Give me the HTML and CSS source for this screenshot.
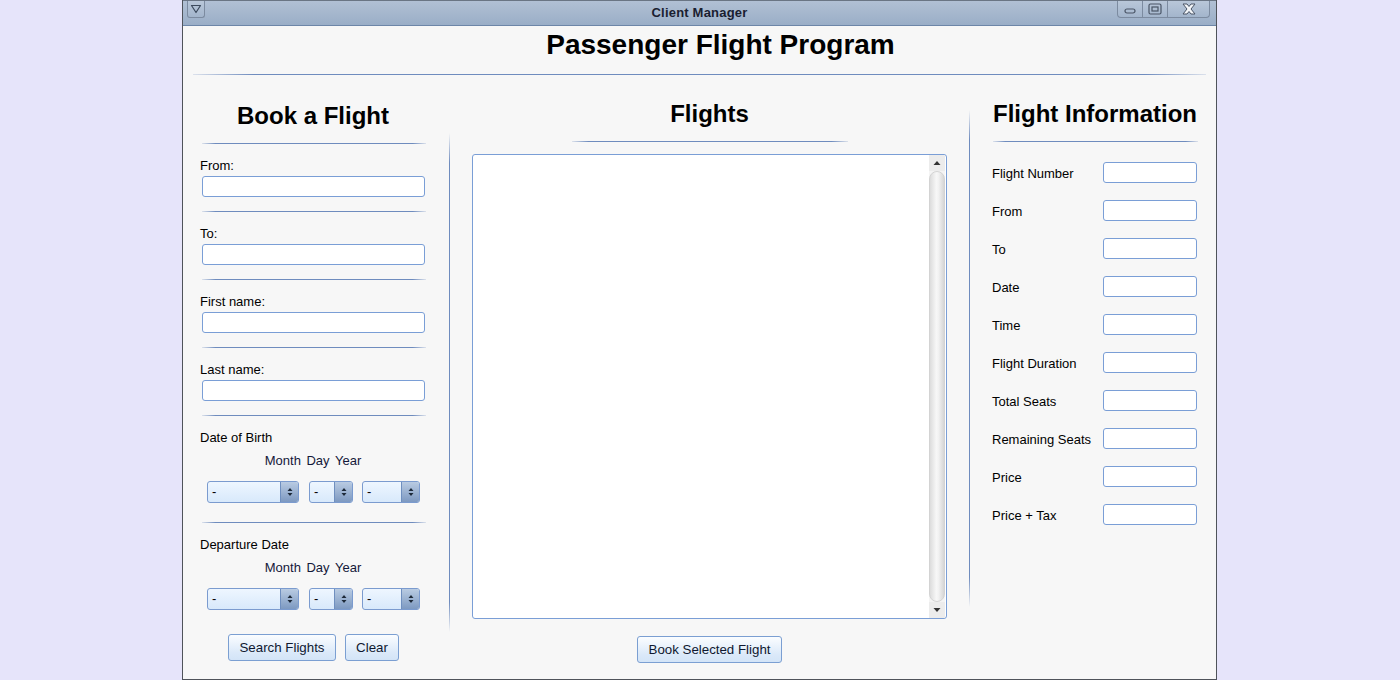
FILE: index.html
```html
<!DOCTYPE html>
<html>
<head>
<meta charset="utf-8">
<link rel="stylesheet" href="styles.css">
</head>
<body>
<div class="window">
  <div class="titlebar">
    <div class="sysbtn">
      <svg width="12" height="10" viewBox="0 0 12 10"><path d="M1.5 1.5 L10.5 1.5 L6 8.5 Z" fill="none" stroke="#3d4b5e" stroke-width="1.2" stroke-linejoin="round"/></svg>
    </div>
    <div class="wintitle">Client Manager</div>
    <div class="winbtns">
      <div class="wb wb-min"><svg width="12" height="6" viewBox="0 0 12 6"><rect x="1" y="1" width="10" height="4" rx="2" fill="none" stroke="#4a5566" stroke-width="1.2"/></svg></div>
      <div class="wb wb-max"><svg width="14" height="12" viewBox="0 0 14 12"><rect x="1" y="1" width="12" height="10" rx="1.5" fill="none" stroke="#4a5566" stroke-width="1.2"/><rect x="4" y="4" width="6" height="4" fill="none" stroke="#4a5566" stroke-width="1.2"/></svg></div>
      <div class="wb wb-close"><svg width="14" height="12" viewBox="0 0 14 12"><path d="M1 1 L5 1 L7 3.5 L9 1 L13 1 L9 6 L13 11 L9 11 L7 8.5 L5 11 L1 11 L5 6 Z" fill="#f4f6f9" stroke="#4a5566" stroke-width="1" stroke-linejoin="round"/></svg></div>
    </div>
  </div>
  <div class="content">
    <div class="header">
      <h1 class="apptitle">Passenger Flight Program</h1>
      <div class="sep hsep-main"></div>
    </div>
    <div class="main">
      <div class="col-left">
        <h2 class="coltitle">Book a Flight</h2>
        <div class="sep lsep"></div>
        <div class="lbl">From:</div>
        <div class="field"></div>
        <div class="sep lsep"></div>
        <div class="lbl">To:</div>
        <div class="field"></div>
        <div class="sep lsep"></div>
        <div class="lbl">First name:</div>
        <div class="field"></div>
        <div class="sep lsep"></div>
        <div class="lbl">Last name:</div>
        <div class="field"></div>
        <div class="sep lsep"></div>
        <div class="lbl">Date of Birth</div>
        <div class="mdy">Month Day Year</div>
        <div class="combos">
          <div class="combo c-month"><span class="cval">-</span><span class="carrow"><svg width="6" height="10" viewBox="0 0 6 10"><path d="M0.5 4 L3 1 L5.5 4 Z M0.5 6 L3 9 L5.5 6 Z" fill="#1e2a3a"/></svg></span></div>
          <div class="combo c-day"><span class="cval">-</span><span class="carrow"><svg width="6" height="10" viewBox="0 0 6 10"><path d="M0.5 4 L3 1 L5.5 4 Z M0.5 6 L3 9 L5.5 6 Z" fill="#1e2a3a"/></svg></span></div>
          <div class="combo c-year"><span class="cval">-</span><span class="carrow"><svg width="6" height="10" viewBox="0 0 6 10"><path d="M0.5 4 L3 1 L5.5 4 Z M0.5 6 L3 9 L5.5 6 Z" fill="#1e2a3a"/></svg></span></div>
        </div>
        <div class="sep lsep sep-after-combo"></div>
        <div class="lbl">Departure Date</div>
        <div class="mdy">Month Day Year</div>
        <div class="combos">
          <div class="combo c-month"><span class="cval">-</span><span class="carrow"><svg width="6" height="10" viewBox="0 0 6 10"><path d="M0.5 4 L3 1 L5.5 4 Z M0.5 6 L3 9 L5.5 6 Z" fill="#1e2a3a"/></svg></span></div>
          <div class="combo c-day"><span class="cval">-</span><span class="carrow"><svg width="6" height="10" viewBox="0 0 6 10"><path d="M0.5 4 L3 1 L5.5 4 Z M0.5 6 L3 9 L5.5 6 Z" fill="#1e2a3a"/></svg></span></div>
          <div class="combo c-year"><span class="cval">-</span><span class="carrow"><svg width="6" height="10" viewBox="0 0 6 10"><path d="M0.5 4 L3 1 L5.5 4 Z M0.5 6 L3 9 L5.5 6 Z" fill="#1e2a3a"/></svg></span></div>
        </div>
        <div class="btnrow">
          <button class="btn btn-search">Search Flights</button>
          <button class="btn btn-clear">Clear</button>
        </div>
      </div>
      <div class="vsep vsep-left"></div>
      <div class="col-center">
        <h2 class="coltitle">Flights</h2>
        <div class="sep csep"></div>
        <div class="listbox">
          <div class="listarea"></div>
          <div class="scrollbar">
            <div class="sb-arrow"><svg width="8" height="6" viewBox="0 0 8 6"><path d="M0.5 5 L4 1 L7.5 5 Z" fill="#333"/></svg></div>
            <div class="sb-track"></div>
            <div class="sb-arrow"><svg width="8" height="6" viewBox="0 0 8 6"><path d="M0.5 1 L4 5 L7.5 1 Z" fill="#333"/></svg></div>
          </div>
        </div>
        <button class="btn btn-book">Book Selected Flight</button>
      </div>
      <div class="vsep vsep-right"></div>
      <div class="col-right">
        <h2 class="coltitle rtitle">Flight Information</h2>
        <div class="sep rsep"></div>
        <div class="info">
          <div class="irow"><span class="ilbl">Flight Number</span><div class="ifield"></div></div>
          <div class="irow"><span class="ilbl">From</span><div class="ifield"></div></div>
          <div class="irow"><span class="ilbl">To</span><div class="ifield"></div></div>
          <div class="irow"><span class="ilbl">Date</span><div class="ifield"></div></div>
          <div class="irow"><span class="ilbl">Time</span><div class="ifield"></div></div>
          <div class="irow"><span class="ilbl">Flight Duration</span><div class="ifield"></div></div>
          <div class="irow"><span class="ilbl">Total Seats</span><div class="ifield"></div></div>
          <div class="irow"><span class="ilbl">Remaining Seats</span><div class="ifield"></div></div>
          <div class="irow"><span class="ilbl">Price</span><div class="ifield"></div></div>
          <div class="irow"><span class="ilbl">Price + Tax</span><div class="ifield"></div></div>
        </div>
      </div>
    </div>
  </div>
</div>
</body>
</html>
```

FILE: styles.css
```css
* { box-sizing: border-box; }
html, body { margin: 0; padding: 0; }
body {
  background: #e6e4fa;
  font-family: "Liberation Sans", Arial, sans-serif;
  color: #000;
  width: 1400px;
  height: 680px;
  overflow: hidden;
}
.window {
  width: 1035px;
  height: 680px;
  margin-left: 182px;
  border-left: 1px solid #4f535a;
  border-right: 1px solid #4f535a;
  border-bottom: 1px solid #4f535a;
  background: #f7f7f7;
  display: flex;
  flex-direction: column;
}
.titlebar {
  height: 26px;
  flex: none;
  position: relative;
  background: linear-gradient(#b1c0d4, #9aaec7);
  border-top: 1px solid #6a7584;
  border-bottom: 1px solid #6d86a8;
  display: flex;
  align-items: flex-start;
}
.sysbtn {
  width: 18px;
  height: 17px;
  margin-left: 4px;
  border: 1px solid #7c8ba0;
  border-top: none;
  border-radius: 0 0 3px 3px;
  background: linear-gradient(#b9c7d9, #a3b5cc);
  display: flex;
  align-items: center;
  justify-content: center;
}
.wintitle {
  position: absolute;
  left: 0;
  right: 0;
  top: 4px;
  text-align: center;
  font-size: 13px;
  letter-spacing: 0.2px;
  font-weight: bold;
  color: #1a2030;
  pointer-events: none;
}
.winbtns {
  margin-left: auto;
  margin-right: 6px;
  height: 17px;
  display: flex;
  border: 1px solid #7c8ba0;
  border-top: none;
  border-radius: 0 0 4px 4px;
  background: linear-gradient(#b9c7d9, #a3b5cc);
}
.wb {
  height: 100%;
  display: flex;
  align-items: center;
  justify-content: center;
}
.wb-min { width: 25px; border-right: 1px solid #7c8ba0; padding-top: 3px; }
.wb-max { width: 25px; border-right: 1px solid #7c8ba0; }
.wb-close { width: 41px; }

.content {
  flex: 1;
  display: flex;
  flex-direction: column;
}
.header {
  padding-top: 3px;
}
.apptitle {
  margin: 0;
  padding-left: 42px;
  font-size: 28px;
  line-height: 32px;
  font-weight: bold;
  text-align: center;
}
.sep {
  height: 1px;
  background: linear-gradient(to right, rgba(111,140,190,0.2), #6f8cbe 6%, #6f8cbe 94%, rgba(111,140,190,0.2));
}
.hsep-main {
  margin: 13px 10px 0 10px;
}
.main {
  flex: 1;
  display: flex;
  padding-left: 10px;
}
.coltitle {
  margin: 0;
  font-size: 24px;
  line-height: 28px;
  font-weight: bold;
  text-align: center;
}
.col-left {
  width: 240px;
  margin-right: 16px;
  display: flex;
  flex-direction: column;
  padding-top: 27px;
}
.col-left .coltitle { margin-bottom: 13px; }
.lsep {
  margin-left: 9px;
  width: 224px;
}
.lbl {
  font-size: 13px;
  line-height: 16px;
  margin-top: 14px;
  padding-left: 7px;
}
.field {
  margin-top: 2px;
  margin-left: 9px;
  width: 223px;
  height: 21px;
  border: 1px solid #7a9ed6;
  border-radius: 3px;
  background: #fff;
  margin-bottom: 14px;
}
.mdy {
  font-size: 13px;
  line-height: 16px;
  margin-top: 7px;
  text-align: center;
  word-spacing: 2px;
  color: #14183a;
}
.combos {
  margin-top: 12px;
  display: flex;
  justify-content: center;
  gap: 10px;
  padding-left: 1px;
}
.combo {
  height: 22px;
  border: 1px solid #7b9bcf;
  border-radius: 3px;
  display: flex;
  overflow: hidden;
  background: linear-gradient(#eef6ff, #d8e9fb);
}
.c-month { width: 92px; }
.c-day { width: 44px; margin-right: -1px; }
.c-year { width: 58px; }
.cval {
  flex: 1;
  font-size: 13px;
  line-height: 20px;
  padding-left: 4px;
}
.carrow {
  width: 18px;
  border-left: 1px solid #6f8fbf;
  background: linear-gradient(#b9cbe2, #7d99c1);
  display: flex;
  align-items: center;
  justify-content: center;
}
.sep-after-combo {
  margin-top: 19px;
}
.btnrow {
  margin-top: 24px;
  display: flex;
  justify-content: center;
  gap: 9px;
  padding-left: 1px;
}
.btn {
  font-family: "Liberation Sans", Arial, sans-serif;
  font-size: 13.3px;
  height: 27px;
  padding: 0;
  border: 1px solid #7b9fd2;
  border-radius: 3px;
  background: linear-gradient(#fbfdff, #dbe9f9 70%, #d3e4f7);
  color: #0f1830;
}
.btn-search { width: 108px; }
.btn-clear { width: 54px; }
.vsep {
  width: 1px;
  background: linear-gradient(rgba(111,140,190,0), #6f8cbe 6%, #6f8cbe 94%, rgba(111,140,190,0));
}
.vsep-left {
  margin-top: 58px;
  height: 499px;
}
.vsep-right {
  margin-top: 35px;
  height: 497px;
}
.col-center {
  width: 519px;
  display: flex;
  flex-direction: column;
  align-items: center;
  padding-top: 25px;
}
.csep {
  margin-top: 13px;
  width: 276px;
  margin-left: 1px;
}
.listbox {
  margin-top: 12px;
  width: 475px;
  height: 465px;
  border: 1px solid #7a9ed6;
  border-radius: 3px;
  background: #fff;
  display: flex;
  overflow: hidden;
}
.listarea { flex: 1; }
.scrollbar {
  width: 16px;
  margin-right: 1px;
  display: flex;
  flex-direction: column;
  background: #f4f4f4;
}
.sb-arrow {
  height: 16px;
  display: flex;
  align-items: center;
  justify-content: center;
  background: #ececec;
}
.sb-track {
  flex: 1;
  border-radius: 8px;
  border: 1px solid #d3d3d3;
  background: linear-gradient(to right, #dcdcdc, #f7f7f7 45%, #f2f2f2 60%, #d6d6d6);
}
.btn-book {
  margin-top: 17px;
  width: 145px;
}
.col-right {
  flex: 1;
  display: flex;
  flex-direction: column;
  padding-top: 25px;
  padding-left: 22px;
}
.rtitle {
  text-align: left;
  padding-left: 1px;
}
.rsep {
  margin-top: 13px;
  margin-left: 1px;
  width: 205px;
}
.info {
  margin-top: 20px;
  display: flex;
  flex-direction: column;
  gap: 17px;
}
.irow {
  display: flex;
  align-items: center;
  height: 21px;
}
.ilbl {
  width: 111px;
  font-size: 13px;
  padding-top: 2px;
}
.ifield {
  width: 94px;
  height: 21px;
  border: 1px solid #7a9ed6;
  border-radius: 3px;
  background: #fff;
}
```
